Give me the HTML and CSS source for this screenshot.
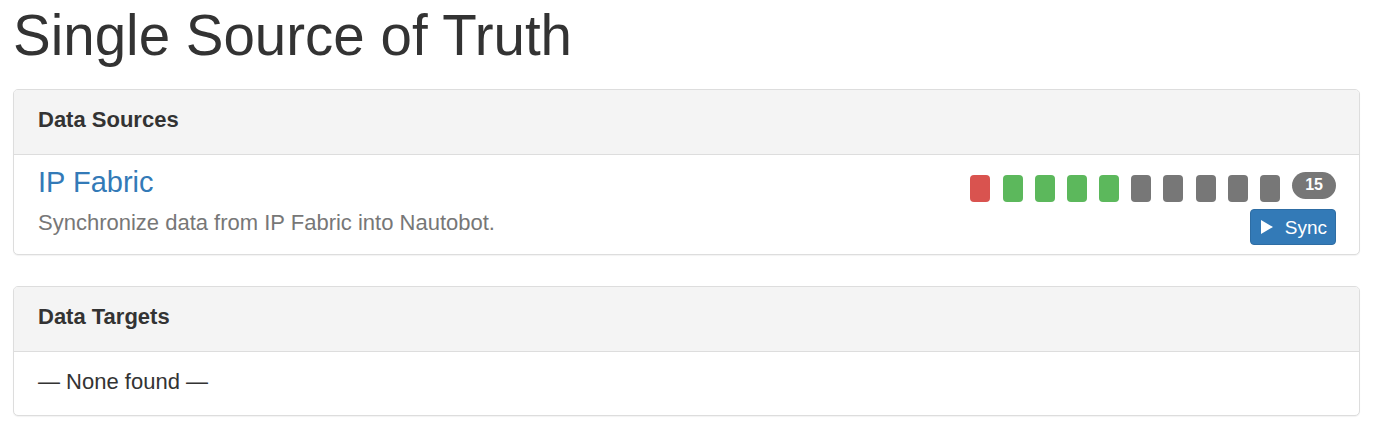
FILE: index.html
```html
<!DOCTYPE html>
<html lang="en">
<head>
  <meta charset="UTF-8">
  <title>Single Source of Truth</title>
  <link rel="stylesheet" href="styles.css">
</head>
<body>
  <div class="container">
    <h1 class="page-title">Single Source of Truth</h1>

    <!-- Data Sources -->
    <div class="panel">
      <div class="panel-heading">Data Sources</div>
      <div class="panel-body source-row">
        <div class="source-info">
          <a class="source-name" href="#">IP Fabric</a>
          <p class="source-desc">Synchronize data from IP Fabric into Nautobot.</p>
        </div>
        <div class="source-actions">
          <div class="job-history">
            <span class="job-status failed"></span>
            <span class="job-status completed"></span>
            <span class="job-status completed"></span>
            <span class="job-status completed"></span>
            <span class="job-status completed"></span>
            <span class="job-status pending"></span>
            <span class="job-status pending"></span>
            <span class="job-status pending"></span>
            <span class="job-status pending"></span>
            <span class="job-status pending"></span>
            <span class="badge">15</span>
          </div>
          <a class="btn btn-primary" href="#">
            <svg width="12" height="14" viewBox="0 0 12 14"><path d="M0 0 L12 7 L0 14 Z" fill="#fff"/></svg>
            <span>Sync</span>
          </a>
        </div>
      </div>
    </div>

    <!-- Data Targets -->
    <div class="panel">
      <div class="panel-heading">Data Targets</div>
      <div class="panel-body empty-row">&mdash; None found &mdash;</div>
    </div>
  </div>
</body>
</html>
```

FILE: styles.css
```css
body {
  margin: 0;
  font-family: "Liberation Sans", Arial, sans-serif;
  font-size: 22px;
  line-height: 1.42857;
  color: #333;
  background: #fff;
}
.container {
  padding: 0 34px 0 13px;
}
.page-title {
  font-size: 56.5px;
  font-weight: 400;
  line-height: 1.1;
  margin: 5px 0 22px;
  color: #333;
}
.panel {
  background: #fff;
  border: 1px solid #ddd;
  border-radius: 5px;
  box-shadow: 0 1px 1px rgba(0, 0, 0, 0.05);
  margin-bottom: 31px;
}
.panel-heading {
  background: #f4f4f4;
  border-bottom: 1px solid #ddd;
  border-radius: 4px 4px 0 0;
  padding: 18px 24px 22px;
  font-weight: 700;
  line-height: 24px;
}
.panel-body {
  padding: 14px 24px 17px;
}
.source-row {
  display: flex;
  justify-content: space-between;
  align-items: flex-start;
  padding: 12px 23px 9px 24px;
}
.source-name {
  display: block;
  font-size: 29px;
  line-height: 1.1;
  color: #337ab7;
  text-decoration: none;
}
.source-desc {
  margin: 8px 0 0;
  color: #777;
}
.source-actions {
  display: flex;
  flex-direction: column;
  align-items: flex-end;
  margin-top: 5px;
}
.job-history {
  display: flex;
  align-items: flex-start;
  gap: 12.2px;
  height: 30px;
}
.job-status {
  width: 20px;
  height: 27px;
  margin-top: 3px;
  border-radius: 4px;
  background: #777;
}
.job-status.failed {
  background: #d9534f;
}
.job-status.completed {
  background: #5cb85c;
}
.badge {
  height: 27px;
  padding: 0 13px;
  border-radius: 14px;
  background: #777;
  color: #fff;
  font-size: 16px;
  font-weight: 700;
  line-height: 25px;
}
.btn {
  display: inline-flex;
  align-items: center;
  gap: 12px;
  margin-top: 7px;
  height: 36px;
  box-sizing: border-box;
  padding: 0 8px 0 10px;
  border: 1px solid #2e6da4;
  border-radius: 4px;
  font-size: 19px;
  text-decoration: none;
}
.btn-primary {
  background: #337ab7;
  color: #fff;
}
.empty-row {
  color: #333;
}
```
